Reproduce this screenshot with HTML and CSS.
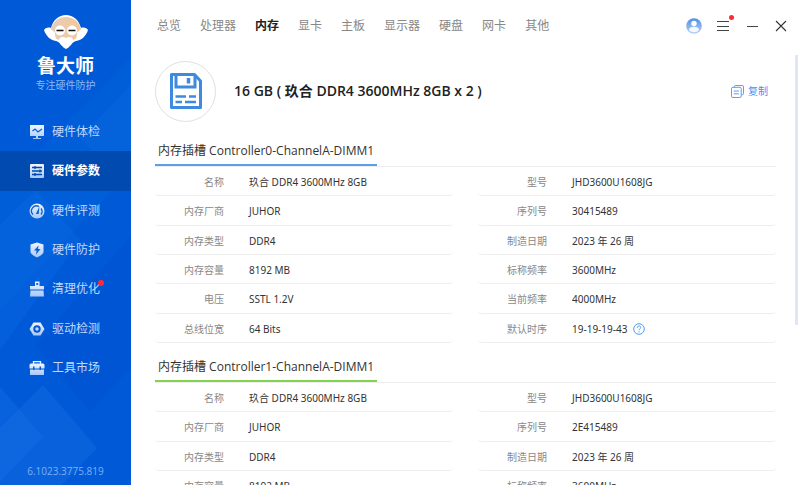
FILE: index.html
```html
<!DOCTYPE html>
<html lang="zh-CN">
<head>
<meta charset="utf-8">
<title>鲁大师</title>
<link rel="stylesheet" href="styles.css">
</head>
<body>
<div class="app">
  <aside class="sidebar">
    <svg class="backdrop" viewBox="0 0 131 485" preserveAspectRatio="none" aria-hidden="true">
      <defs>
        <linearGradient id="ice" x1="0" y1="0" x2="0" y2="1"><stop offset="0" stop-color="#f0f6ff"/><stop offset="1" stop-color="#a6c8f8"/></linearGradient>
      </defs>
      <path d="M131 58 0 190V310L131 170Z" fill="#0467dd" opacity=".35"/>
      <path d="M131 85 80 138 131 190Z" fill="#0d6ee2" opacity=".3"/>
      <path d="M0 225 36 190 80 240 0 350Z" fill="#0a6ee4" opacity=".3"/>
      <path d="M131 235 35 346 90 412 131 368Z" fill="#004fd2" opacity=".5"/>
      <path d="M43 385 97 448 62 485H0V428Z" fill="#1b71e2" opacity=".35"/>
      <path d="M0 387 43 437 0 482Z" fill="#1a74e8" opacity=".35"/>
    </svg>
    <div class="brand">
      <svg class="brand-logo" viewBox="0 0 46 34" aria-hidden="true">
        <defs><linearGradient id="skin" x1="0" x2="1" y1="0" y2="0"><stop offset="0" stop-color="#e6cdbb"/><stop offset="1" stop-color="#f3c79b"/></linearGradient></defs>
        <path d="M8 13C10 5 16 0 23 0s13 5 15 13c3-1 6 0 7 2-2 6-6 10-12 11-3 1-4 2-5 4-2 2-3 3-5 4-2-1-3-2-5-4-1-2-2-3-5-4C7 25 3 21 1 15c1-2 4-3 7-2Z" fill="#fff"/>
        <path d="M8 14C10 6 16 2 23 2s13 4 15 12c-1 2-4 2-4 5s-1 6-5 6H17c-4 0-5-3-5-6s-3-3-4-5Z" fill="url(#skin)"/>
        <circle cx="17" cy="15.500" r="5" fill="#fff"/><circle cx="29" cy="15.500" r="5" fill="#fff"/>
        <path d="M16 25c0-3 4-4 7-2 3-2 7-1 7 2 0 4-4 6-7 8-3-2-7-4-7-8Z" fill="#fff"/>
        <path d="M13.500 15.500h7M25.500 15.500h7" fill="none" stroke="#111" stroke-width="1.500"/>
      </svg>
      <h1 class="brand-name">鲁大师</h1>
      <p class="brand-tag">专注硬件防护</p>
    </div>
    <nav class="menu">
      <a class="menu-item" href="#"><svg viewBox="0 0 16 16"><path fill="url(#ice)" d="M1 1h14v11H1zM7 12h2v2h3v1H4v-1h3z"/><path d="M3.500 7 6 5l3 3 4-3" fill="none" stroke="#0b60d8" stroke-width="1.300"/></svg>硬件体检</a>
      <a class="menu-item active" href="#" aria-current="page"><svg viewBox="0 0 16 16"><rect x="1" y="1" width="14" height="14" rx="1" fill="url(#ice)"/><path d="M3 4.500h10M3 8h10M3 11.500h10M6 3v3M11 6.500v3M6 10v3" stroke="#0048ae" stroke-width="1.300"/></svg>硬件参数</a>
      <a class="menu-item" href="#"><svg viewBox="0 0 16 16"><circle cx="8" cy="8" r="7.500" fill="url(#ice)"/><path d="M4 11.500A5 5 0 0 1 10 3.600M12 5.500a5 5 0 0 1 0 6" fill="none" stroke="#0b60d8" stroke-width="1.300"/><path d="m10.500 3.500-.8 7.500H6.800Z" fill="#0b60d8"/></svg>硬件评测</a>
      <a class="menu-item" href="#"><svg viewBox="0 0 16 16"><path fill="url(#ice)" d="m8 .5 6.500 2v7.500c0 2-4 4.500-6.500 5.500-2.500-1-6.500-3.500-6.500-5.500V2.500Z"/><path fill="#0b60d8" d="M9.500 3.500 5 8.500h2.500L7 12.500l4.500-5.500H9Z"/></svg>硬件防护</a>
      <a class="menu-item" href="#"><svg viewBox="0 0 16 16"><path fill="url(#ice)" fill-rule="evenodd" d="M6 .5h4.500v4.500H15v3.500H1V5h5zM7.300 2v2h1.900V2zM1.500 9.500h13l.5 6H1z"/></svg><span class="flagged">清理优化<i class="dot"></i></span></a>
      <a class="menu-item" href="#"><svg viewBox="0 0 16 16"><path fill="url(#ice)" d="M4.500 1.500h7L15.500 8l-4 6.500h-7L.5 8Z"/><circle cx="8" cy="8" r="2.700" fill="none" stroke="#0756d5" stroke-width="2"/></svg>驱动检测</a>
      <a class="menu-item" href="#"><svg viewBox="0 0 16 16"><path fill="none" stroke="#e8f1ff" stroke-width="1.300" d="M4.500 4V1.700h7V4"/><path fill="url(#ice)" d="M2 3.500h12a1.500 1.500 0 0 1 1.500 1.500v3.500H.5V5A1.500 1.500 0 0 1 2 3.500ZM1 9.500h14V15H1z"/><path fill="#0756d5" d="M4 6.500h1.500V10H4zM10.500 6.500H12V10h-1.500z"/></svg>工具市场</a>
    </nav>
    <p class="version">6.1023.3775.819</p>
  </aside>

  <main class="main">
    <header class="topbar">
      <nav class="tabs">
        <a href="#">总览</a><a href="#">处理器</a><a class="current" href="#" aria-current="page">内存</a><a href="#">显卡</a><a href="#">主板</a><a href="#">显示器</a><a href="#">硬盘</a><a href="#">网卡</a><a href="#">其他</a>
      </nav>
      <div class="window-tools">
        <button type="button" aria-label="账户"><svg viewBox="0 0 16 16"><defs><linearGradient id="user" x1="0" y1="0" x2="0" y2="1"><stop offset="0" stop-color="#4d8ee5"/><stop offset="1" stop-color="#b9d3f7"/></linearGradient></defs><circle cx="8" cy="8" r="7.800" fill="url(#user)"/><circle cx="8" cy="5.500" r="2.700" fill="#fff"/><path d="M3 12c0-2 2-3.200 5-3.200S13 10 13 12c-1 1.500-3 2.200-5 2.200S4 13.500 3 12Z" fill="#f4f8ff"/></svg></button>
        <button type="button" aria-label="菜单"><svg viewBox="0 0 16 16"><path d="M2 3.500h12M2 8.500h12M2 12.500h12" stroke="#444"/></svg><i class="dot"></i></button>
        <button type="button" aria-label="最小化"><svg viewBox="0 0 16 16"><path d="M3 8.500h11" stroke="#444"/></svg></button>
        <button type="button" aria-label="关闭"><svg viewBox="0 0 16 16"><path d="m3 3 10 10M13 3 3 13" stroke="#333" stroke-width="1.100"/></svg></button>
      </div>
    </header>

    <div class="content">
      <div class="summary">
        <span class="device"><svg viewBox="0 0 32 36" fill="none" stroke="#3d8ae0" stroke-width="3"><path d="M1.500 1.500h23l6 6.500v26.500h-29z" stroke-linejoin="round"/><path d="M6 2v12h19V2"/><path d="M18.500 5v5.500" stroke-width="3.500"/><path d="M5.500 23.500H16m3 0h7M5.500 29H12m3 0h11" stroke-width="2.500"/></svg></span>
        <h2 class="summary-title">16 GB ( 玖合 DDR4 3600MHz 8GB x 2 )</h2>
        <button type="button" class="copy"><svg viewBox="0 0 14 14" fill="none" stroke="#4b93f5"><path d="M3.500 2.500V2A1.500 1.500 0 0 1 5 .5h7A1.500 1.500 0 0 1 13.500 2v7a1.500 1.500 0 0 1-1.500 1.500h-.5"/><rect x=".5" y="2.500" width="10.500" height="11" rx="1.500"/><path d="M3 6.500h5.500M3 9.500h5.500"/></svg>复制</button>
      </div>

      <section class="slot">
        <h3 class="slot-head"><span>内存插槽 Controller0-ChannelA-DIMM1</span></h3>
        <dl class="specs">
          <div><dt>名称</dt><dd>玖合 DDR4 3600MHz 8GB</dd></div><div><dt>型号</dt><dd>JHD3600U1608JG</dd></div>
          <div><dt>内存厂商</dt><dd>JUHOR</dd></div><div><dt>序列号</dt><dd>30415489</dd></div>
          <div><dt>内存类型</dt><dd>DDR4</dd></div><div><dt>制造日期</dt><dd>2023 年 26 周</dd></div>
          <div><dt>内存容量</dt><dd>8192 MB</dd></div><div><dt>标称频率</dt><dd>3600MHz</dd></div>
          <div><dt>电压</dt><dd>SSTL 1.2V</dd></div><div><dt>当前频率</dt><dd>4000MHz</dd></div>
          <div><dt>总线位宽</dt><dd>64 Bits</dd></div><div><dt>默认时序</dt><dd>19-19-19-43<button type="button" class="help" aria-label="帮助"><svg viewBox="0 0 12 12" fill="none" stroke="#4b9bf5"><circle cx="6" cy="6" r="5.300"/><path d="M4.300 4.800C4.300 2.300 7.800 2.500 7.700 4.600 7.700 5.800 6 5.800 6 7.200M6 8.200v1.200"/></svg></button></dd></div>
        </dl>
      </section>

      <section class="slot green">
        <h3 class="slot-head"><span>内存插槽 Controller1-ChannelA-DIMM1</span></h3>
        <dl class="specs">
          <div><dt>名称</dt><dd>玖合 DDR4 3600MHz 8GB</dd></div><div><dt>型号</dt><dd>JHD3600U1608JG</dd></div>
          <div><dt>内存厂商</dt><dd>JUHOR</dd></div><div><dt>序列号</dt><dd>2E415489</dd></div>
          <div><dt>内存类型</dt><dd>DDR4</dd></div><div><dt>制造日期</dt><dd>2023 年 26 周</dd></div>
          <div><dt>内存容量</dt><dd>8192 MB</dd></div><div><dt>标称频率</dt><dd>3600MHz</dd></div>
        </dl>
      </section>
    </div>
    <div class="scroll-thumb"></div>
  </main>
</div>
</body>
</html>
```
FILE: styles.css
```css
* { box-sizing: border-box; }
body, h1, h2, h3, p, dl, dd { margin: 0; }
body {
  font-family: "Open Sans", "Noto Sans CJK SC", sans-serif;
  font-size: 12px;
  line-height: 16px;
  color: #333;
  background: #fff;
}
a { color: inherit; text-decoration: none; }
button { padding: 0; border: 0; background: none; font: inherit; color: inherit; }
svg { display: block; }

.app { display: flex; height: 100vh; overflow: hidden; }

/* Sidebar */
.sidebar {
  position: relative;
  display: flex;
  flex-direction: column;
  flex: 0 0 131px;
  background: #005ad8;
  color: #bfd9fc;
}
.backdrop { position: absolute; inset: 0; width: 100%; height: 100%; }
.brand, .menu, .version { position: relative; }
.brand {
  display: flex;
  flex-direction: column;
  align-items: center;
  height: 112px;
  padding-top: 15px;
}
.brand-logo { width: 46px; height: 34px; }
.brand-name {
  margin-top: 5px;
  font: 700 19px/22px "Noto Sans CJK SC", sans-serif;
  color: #fff;
}
.brand-tag { font-size: 10px; line-height: 18px; color: #8bb8f3; }
.menu { display: grid; grid-auto-rows: 1fr; height: 276px; }
.menu-item { display: flex; align-items: center; gap: 7px; padding-left: 29px; }
.menu-item svg { width: 16px; height: 16px; }
.menu-item.active { background: #004ab0; color: #fff; font-weight: 700; }
.flagged { position: relative; }
.dot {
  position: absolute;
  top: -1px;
  right: -4px;
  width: 6px;
  height: 6px;
  border-radius: 50%;
  background: #ff2a35;
}
.version {
  margin-top: auto;
  padding-bottom: 6px;
  text-align: center;
  font-size: 10px;
  color: #7db0f3;
}

/* Top bar */
.main { position: relative; display: flex; flex-direction: column; flex: 1; min-width: 0; }
.topbar {
  display: flex;
  align-items: center;
  justify-content: space-between;
  flex: 0 0 51px;
  padding: 0 11px 0 26px;
}
.tabs { display: flex; gap: 19px; color: #888; }
.tabs .current { color: #222; font-weight: 700; }
.window-tools { display: flex; gap: 13px; }
.window-tools button { position: relative; }
.window-tools svg { width: 16px; height: 16px; }
.window-tools .dot { top: -3px; right: -3px; width: 5px; height: 5px; }

/* Content */
.content { flex: 1; min-height: 0; overflow: hidden; padding: 9px 24px 0 24px; }
.summary { display: flex; align-items: center; height: 67px; padding-bottom: 5px; }
.device {
  display: grid;
  place-items: center;
  width: 61px;
  height: 61px;
  border: 1px solid #e0e0e0;
  border-radius: 50%;
}
.device svg { width: 32px; height: 36px; }
.summary-title { margin-left: 18px; font-size: 14px; font-weight: 600; line-height: 20px; color: #222; }
.copy {
  display: flex;
  align-items: center;
  gap: 4px;
  margin-left: auto;
  padding-right: 8px;
  font-size: 10px;
  color: #4b8ef5;
}
.copy svg { width: 13px; height: 13px; }

.slot-head {
  display: flex;
  height: 40px;
  border-bottom: 1px solid #eee;
  font-size: 12px;
  font-weight: 400;
}
.slot-head span { height: 39px; padding: 16px 3px 0; border-bottom: 2px solid #5b9fe3; }
.green .slot-head span { border-color: #83d34e; }
.specs {
  display: grid;
  grid-template-columns: 1fr 1fr;
  grid-template-rows: repeat(6, 1fr);
  column-gap: 25px;
  height: 176px;
  font-family: "Noto Sans", "Noto Sans CJK SC", sans-serif;
  font-size: 10px;
}
.specs > div {
  display: flex;
  align-items: center;
  gap: 25px;
  padding-top: 2px;
  border-bottom: 1px solid #eee;
  border-radius: 4px;
}
dt { flex: 0 0 69px; text-align: right; color: #888; }
dd { display: flex; align-items: center; }
.help { margin-left: 6px; }
.help svg { width: 12px; height: 12px; }

.scroll-thumb {
  position: absolute;
  top: 55px;
  right: 2px;
  width: 3px;
  height: 270px;
  background: #dfe7f5;
}
```
